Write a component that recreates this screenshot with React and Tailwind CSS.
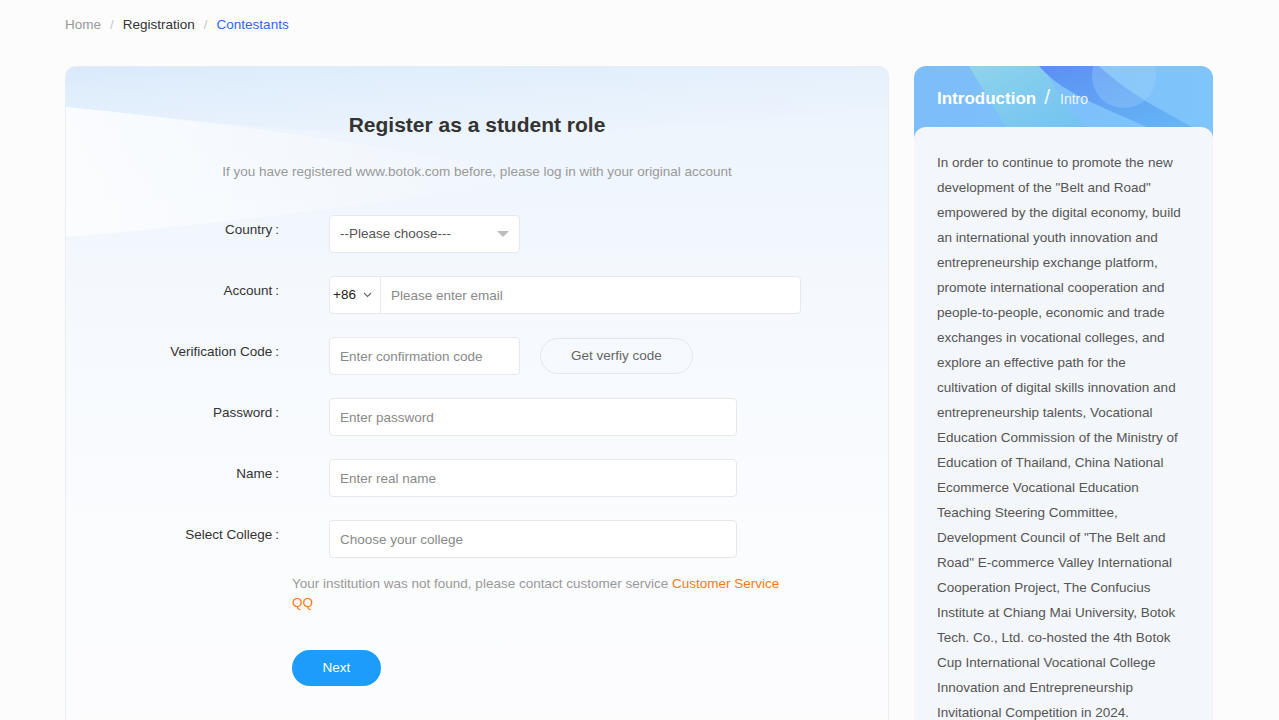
import React from "react";

const font = { fontFamily: '"Liberation Sans", Arial, "Noto Sans CJK SC", sans-serif' };

const intro =
  'In order to continue to promote the new development of the "Belt and Road" empowered by the digital economy, build an international youth innovation and entrepreneurship exchange platform, promote international cooperation and people-to-people, economic and trade exchanges in vocational colleges, and explore an effective path for the cultivation of digital skills innovation and entrepreneurship talents, Vocational Education Commission of the Ministry of Education of Thailand, China National Ecommerce Vocational Education Teaching Steering Committee, Development Council of "The Belt and Road" E-commerce Valley International Cooperation Project, The Confucius Institute at Chiang Mai University, Botok Tech. Co., Ltd. co-hosted the 4th Botok Cup International Vocational College Innovation and Entrepreneurship Invitational Competition in 2024.';

const FormRow = ({ label, children }) => (
  <div className="flex items-start">
    <div className="w-[213px] shrink-0 text-right pt-[6px] text-[13.5px] leading-[18px] text-[#333]">
      {label}
      <span className="ml-[3px]">:</span>
    </div>
    <div className="ml-[50px] flex items-center">{children}</div>
  </div>
);

const inputCls =
  "h-[38px] bg-white border border-[#e6e8ec] rounded-[4px] px-[10px] text-[13.5px] text-[#333] placeholder-[#8a8a8a] outline-none";

export default function App() {
  return (
    <div className="min-h-screen bg-[#fcfcfd]" style={font}>
      <div className="ml-[65px] w-[1148px]">
        {/* breadcrumb */}
        <div className="pt-[16px] flex items-center text-[13.5px] leading-[18px]">
          <span className="text-[#999]">Home</span>
          <span className="mx-[9px] text-[#c8c8c8]">/</span>
          <span className="text-[#333]">Registration</span>
          <span className="mx-[9px] text-[#c8c8c8]">/</span>
          <span className="text-[#2a6af0]">Contestants</span>
        </div>

        <div className="mt-[32px] flex gap-[25px] items-start">
          {/* left card */}
          <div className="relative w-[824px] h-[700px] rounded-[10px] border border-[#e8edf4] overflow-hidden bg-[linear-gradient(180deg,#ebf3fc_0%,#f5f9fe_35%,#fbfcfe_70%,#fcfcfd_100%)]">
            <svg className="absolute inset-0 pointer-events-none" width="824" height="260" viewBox="0 0 824 260">
              <defs>
                <linearGradient id="sheen" x1="0" y1="0" x2="1" y2="0">
                  <stop offset="0" stopColor="#ffffff" stopOpacity="0.7" />
                  <stop offset="0.6" stopColor="#ffffff" stopOpacity="0.25" />
                  <stop offset="1" stopColor="#ffffff" stopOpacity="0" />
                </linearGradient>
                <linearGradient id="blueglow" x1="0" y1="0" x2="1" y2="1">
                  <stop offset="0" stopColor="#d8e9fb" stopOpacity="0.9" />
                  <stop offset="1" stopColor="#e6f1fd" stopOpacity="0" />
                </linearGradient>
              </defs>
              <path d="M0 40 C 200 60, 350 90, 824 40 L824 0 L0 0 Z" fill="url(#blueglow)" />
              <path d="M0 40 C 150 55, 300 75, 480 110 C 300 140, 120 160, 0 170 Z" fill="url(#sheen)" />
            </svg>
            <div className="relative">
              <h1 className="pt-[44px] text-center text-[21px] leading-[28px] font-bold text-[#333]">
                Register as a student role
              </h1>
              <p className="mt-[24px] text-center text-[13.5px] leading-[18px] text-[#999]">
                If you have registered www.botok.com before, please log in with your original account
              </p>

              <div className="mt-[34px] flex flex-col gap-[23px]">
                <FormRow label="Country">
                  <div className={`${inputCls} w-[191px] flex items-center justify-between`}>
                    <span className="text-[#555]">--Please choose---</span>
                    <svg width="12" height="7" viewBox="0 0 12 7">
                      <path d="M0 0 L12 0 L6 6 Z" fill="#bdbdbd" />
                    </svg>
                  </div>
                </FormRow>
                <FormRow label="Account">
                  <div className="h-[38px] w-[52px] bg-white border border-[#e6e8ec] rounded-l-[4px] flex items-center pl-[3px] gap-[7px] text-[13.5px] text-[#222]">
                    <span>+86</span>
                    <svg width="9" height="6" viewBox="0 0 9 6">
                      <path d="M1 1 L4.5 4.5 L8 1" stroke="#666" strokeWidth="1.1" fill="none" />
                    </svg>
                  </div>
                  <input className={`${inputCls} w-[421px] -ml-px rounded-l-none`} placeholder="Please enter email" />
                </FormRow>
                <FormRow label="Verification Code">
                  <input className={`${inputCls} w-[191px]`} placeholder="Enter confirmation code" />
                  <button className="ml-[20px] h-[36px] w-[153px] rounded-full border border-[#e2e7ef] text-[13.5px] text-[#666]">
                    Get verfiy code
                  </button>
                </FormRow>
                <FormRow label="Password">
                  <input type="password" className={`${inputCls} w-[408px]`} placeholder="Enter password" />
                </FormRow>
                <FormRow label="Name">
                  <input className={`${inputCls} w-[408px]`} placeholder="Enter real name" />
                </FormRow>
                <FormRow label="Select College">
                  <input className={`${inputCls} w-[408px]`} placeholder="Choose your college" />
                </FormRow>
              </div>

              <p className="ml-[226px] mt-[16px] w-[500px] text-[13.5px] leading-[19px] text-[#999]">
                Your institution was not found, please contact customer service <span className="text-[#ff7a0f]">Customer Service QQ</span>
              </p>

              <button className="ml-[226px] mt-[38px] h-[36px] w-[89px] rounded-full bg-[#1e9cfc] text-white text-[13.5px]">
                Next
              </button>
            </div>
          </div>

          {/* right card */}
          <div className="w-[299px] shrink-0 rounded-[12px] overflow-hidden">
            <div className="relative h-[73px] bg-[linear-gradient(90deg,#7dbdf9_0%,#7fc4fb_100%)] overflow-hidden">
              <svg className="absolute inset-0" width="299" height="73" viewBox="0 0 299 73">
                <defs>
                  <linearGradient id="hb1" x1="0" y1="0" x2="1" y2="1">
                    <stop offset="0" stopColor="#8fd6ea" stopOpacity="0.95" />
                    <stop offset="1" stopColor="#6cc0ef" stopOpacity="0.7" />
                  </linearGradient>
                  <linearGradient id="hb2" x1="0" y1="0" x2="1" y2="1">
                    <stop offset="0" stopColor="#5585f2" stopOpacity="0.85" />
                    <stop offset="1" stopColor="#5ab4f3" stopOpacity="0.6" />
                  </linearGradient>
                </defs>
                <path d="M55 0 C 70 25, 85 50, 100 73 L 185 73 C 160 50, 140 25, 130 0 Z" fill="url(#hb1)" />
                <path d="M125 0 C 150 30, 200 45, 260 73 L 300 73 L 240 40 C 215 25, 195 10, 185 0 Z" fill="url(#hb2)" />
                <circle cx="210" cy="10" r="32" fill="#a8d8fc" opacity="0.3" />
              </svg>
              <div className="relative pl-[23px] pt-[20px] flex items-baseline text-white">
                <span className="text-[17px] font-bold leading-[22px]">Introduction</span>
                <span className="ml-[8px] text-[21px] font-light opacity-90 leading-[22px]">/</span>
                <span className="ml-[10px] text-[14px] opacity-85">Intro</span>
              </div>
            </div>
            <div className="-mt-[12px] relative rounded-t-[12px] bg-[#f3f6fa] pl-[23px] pr-[30px] pt-[23px] pb-[20px] h-[620px]">
              <p className="text-[13.5px] leading-[25px] text-[#555]">{intro}</p>
            </div>
          </div>
        </div>
      </div>
    </div>
  );
}
